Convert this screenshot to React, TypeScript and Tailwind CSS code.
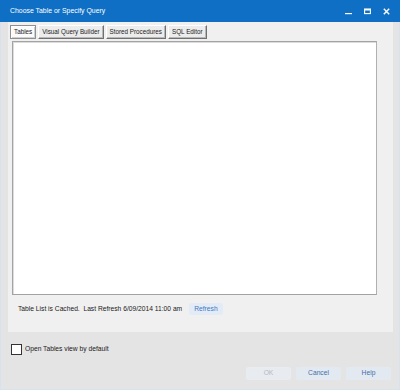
import { useState } from 'react';

const tabs = ['Tables', 'Visual Query Builder', 'Stored Procedures', 'SQL Editor'];

export default function App() {
  const [active, setActive] = useState(0);
  const [checked, setChecked] = useState(false);

  return (
    <div className="w-[400px] h-[390px] flex flex-col bg-[#e4e4e4] font-['Liberation_Sans',Arial,sans-serif] text-[6.7px] text-[#1a1a1a] overflow-hidden">
      {/* 标题栏 */}
      <div className="h-[22px] shrink-0 bg-[#0e6fc5] flex items-center pl-[10px] pr-[10px] text-white">
        <span className="text-[6.9px]">Choose Table or Specify Query</span>
        <div className="ml-auto flex items-center gap-[12px]">
          <svg width="7" height="7" viewBox="0 0 7 7">
            <rect x="0" y="5" width="7" height="1.2" fill="#fff" />
          </svg>
          <svg width="7" height="7" viewBox="0 0 7 7">
            <rect x="0.6" y="1" width="5.8" height="4.6" fill="none" stroke="#fff" strokeWidth="1.1" />
            <rect x="0.6" y="1" width="5.8" height="1.5" fill="#fff" />
          </svg>
          <svg width="7" height="7" viewBox="0 0 7 7">
            <path d="M0.8 0.8L6.2 6.2M6.2 0.8L0.8 6.2" stroke="#fff" strokeWidth="1.4" />
          </svg>
        </div>
      </div>

      <div className="flex-1 flex flex-col border-x border-b border-[#d8e2ee]">
        {/* 选项卡面板 */}
        <div className="ml-[7px] mr-[6px] h-[310px] bg-[#f0f0f0] flex flex-col pl-[2px]">
          <div className="flex gap-[2px] pt-[3px] h-[17px]">
            {tabs.map((t, i) => (
              <button
                key={t}
                onClick={() => setActive(i)}
                className={
                  'h-[14px] px-[3px] flex items-center leading-none text-[6.3px] border ' +
                  (i === active
                    ? 'bg-[#fbfbfb] border-[#8f8f8f] shadow-[inset_1px_1px_0_#ffffff,inset_-1px_-1px_0_#d0d0d0]'
                    : 'bg-[#ececec] border-t-[#ffffff] border-l-[#ffffff] border-r-[#707070] border-b-[#707070] shadow-[inset_-1px_-1px_0_#b8b8b8]')
                }
              >
                {t}
              </button>
            ))}
          </div>

          {/* 列表区域 */}
          <div className="ml-[2px] mt-[2px] w-[365px] h-[254px] bg-white border border-[#a3a3a3] border-r-[#b0b0b0] shadow-[inset_1px_1px_0_#dcdcdc]" />

          {/* 缓存状态 */}
          <div className="flex items-center mt-[8px] pl-[8px] h-[12px]">
            <span className="whitespace-pre">Table List is Cached.  Last Refresh 6/09/2014 11:00 am</span>
            <button className="ml-[7px] h-[12px] px-[5px] rounded-[2px] bg-[#e3ecf6] text-[#3d78c2]">Refresh</button>
          </div>
        </div>

        {/* 默认视图 */}
        <label className="flex items-center gap-[3px] mt-[11px] ml-[10px] h-[12px]">
          <span
            onClick={() => setChecked(!checked)}
            className="w-[11px] h-[11px] bg-white border border-[#333] flex items-center justify-center"
          >
            {checked && (
              <svg width="8" height="8" viewBox="0 0 8 8">
                <path d="M1 4L3 6L7 1.5" fill="none" stroke="#333" strokeWidth="1.2" />
              </svg>
            )}
          </span>
          <span>Open Tables view by default</span>
        </label>

        {/* 按钮 */}
        <div className="flex justify-end gap-[5px] mt-[12px] pr-[8px]">
          <button disabled className="w-[45px] h-[13px] rounded-[2px] bg-[#e8ebef] text-[#b4bac4]">OK</button>
          <button className="w-[45px] h-[13px] rounded-[2px] bg-[#e3e9f1] text-[#3f6fa8]">Cancel</button>
          <button className="w-[45px] h-[13px] rounded-[2px] bg-[#e3e9f1] text-[#3f6fa8]">Help</button>
        </div>
      </div>
    </div>
  );
}
